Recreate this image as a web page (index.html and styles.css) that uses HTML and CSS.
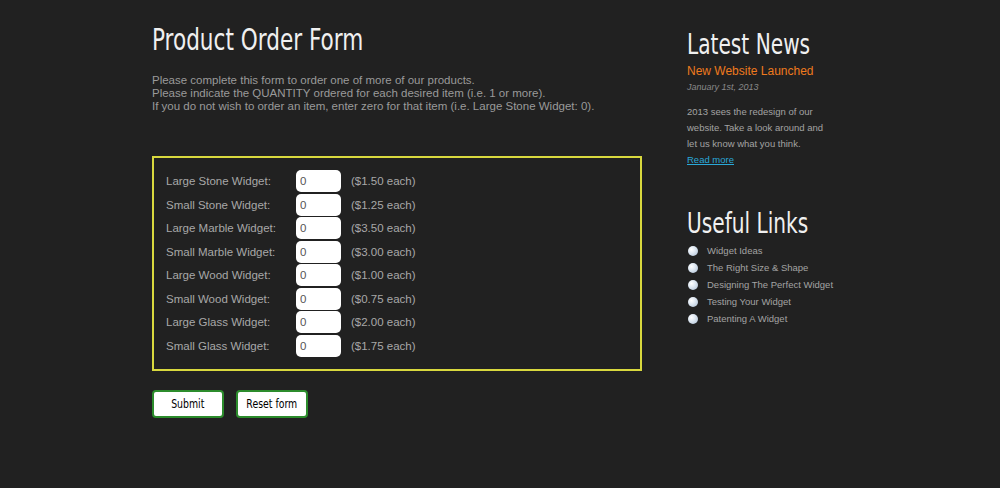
FILE: index.html
```html
<!DOCTYPE html>
<html lang="en">
<head>
  <meta charset="UTF-8" />
  <title>Product Order Form</title>
  <link rel="stylesheet" href="styles.css">
</head>
<body>
  <div class="page">
    <!-- main column -->
    <div class="main">
      <h1 class="title"><span>Product Order Form</span></h1>
      <p class="intro">
        Please complete this form to order one of more of our products.<br>
        Please indicate the QUANTITY ordered for each desired item (i.e. 1 or more).<br>
        If you do not wish to order an item, enter zero for that item (i.e. Large Stone Widget: 0).
      </p>
      <form class="order-form">
        <div class="order-box">
          <div class="item"><label class="item-name">Large Stone Widget:</label><input class="qty" type="text" value="0"><span class="price">($1.50 each)</span></div>
          <div class="item"><label class="item-name">Small Stone Widget:</label><input class="qty" type="text" value="0"><span class="price">($1.25 each)</span></div>
          <div class="item"><label class="item-name">Large Marble Widget:</label><input class="qty" type="text" value="0"><span class="price">($3.50 each)</span></div>
          <div class="item"><label class="item-name">Small Marble Widget:</label><input class="qty" type="text" value="0"><span class="price">($3.00 each)</span></div>
          <div class="item"><label class="item-name">Large Wood Widget:</label><input class="qty" type="text" value="0"><span class="price">($1.00 each)</span></div>
          <div class="item"><label class="item-name">Small Wood Widget:</label><input class="qty" type="text" value="0"><span class="price">($0.75 each)</span></div>
          <div class="item"><label class="item-name">Large Glass Widget:</label><input class="qty" type="text" value="0"><span class="price">($2.00 each)</span></div>
          <div class="item"><label class="item-name">Small Glass Widget:</label><input class="qty" type="text" value="0"><span class="price">($1.75 each)</span></div>
        </div>
        <div class="buttons">
          <button class="btn" type="submit"><span>Submit</span></button>
          <button class="btn" type="reset"><span>Reset form</span></button>
        </div>
      </form>
    </div>

    <!-- sidebar -->
    <div class="sidebar">
      <h2 class="side-title"><span>Latest News</span></h2>
      <div class="news-head">New Website Launched</div>
      <div class="news-date">January 1st, 2013</div>
      <p class="news-text">2013 sees the redesign of our website. Take a look around and let us know what you think.<br><a class="read-more" href="#">Read more</a></p>

      <h2 class="side-title links-title"><span>Useful Links</span></h2>
      <ul class="links">
        <li><a href="#">Widget Ideas</a></li>
        <li><a href="#">The Right Size &amp; Shape</a></li>
        <li><a href="#">Designing The Perfect Widget</a></li>
        <li><a href="#">Testing Your Widget</a></li>
        <li><a href="#">Patenting A Widget</a></li>
      </ul>
    </div>
  </div>
</body>
</html>
```

FILE: styles.css
```css
/* base */
html, body {
  margin: 0;
  padding: 0;
  background: #212121;
  font-family: "Liberation Sans", Arial, sans-serif;
  color: #a3a3a3;
}
.page {
  width: 696px;
  margin: 0 auto;
  padding-top: 22px;
  display: flex;
  gap: 45px;
}

/* headings: narrow display face, squeezed a little */
.title, .side-title {
  margin: 0;
  font-family: "DejaVu Sans Condensed", sans-serif;
  font-weight: normal;
  color: #f0f0f0;
  white-space: nowrap;
}
.title span, .side-title span, .btn span {
  display: inline-block;
  transform: scaleX(0.8);
  transform-origin: left center;
}
.title {
  font-size: 30px;
  line-height: 36px;
}

/* main column */
.main {
  width: 490px;
}
.intro {
  margin: 16px 0 43px;
  font-size: 11.5px;
  line-height: 13px;
  color: #9a9a9a;
}
.order-box {
  border: 2px solid #d8d83e;
  padding: 12px 12px;
  display: flex;
  flex-direction: column;
  gap: 1.5px;
}
.item {
  display: flex;
  align-items: center;
  font-size: 11.5px;
}
.item-name {
  width: 130px;
  color: #a8a8a8;
}
.qty {
  width: 45px;
  height: 22px;
  box-sizing: border-box;
  border: none;
  border-radius: 5px;
  padding: 0 4px;
  font-family: "Liberation Sans", Arial, sans-serif;
  font-size: 11.5px;
  color: #555;
  background: #fff;
}
.price {
  margin-left: 10px;
  color: #a8a8a8;
}

/* buttons */
.buttons {
  margin-top: 19px;
  display: flex;
  gap: 12px;
}
.btn {
  width: 72px;
  height: 28px;
  background: #fff;
  border: 2px solid #2c8c2c;
  border-radius: 4px;
  font-family: "DejaVu Sans Condensed", sans-serif;
  font-size: 13px;
  color: #000;
  padding: 0;
}
.btn span {
  transform-origin: center;
}

/* sidebar */
.sidebar {
  width: 161px;
}
.side-title {
  font-size: 28px;
  line-height: 34px;
  margin-top: 6px;
}
.news-head {
  margin-top: 2px;
  font-size: 12px;
  color: #ee7a1e;
}
.news-date {
  margin-top: 4px;
  font-size: 9px;
  font-style: italic;
  color: #8a8a8a;
}
.news-text {
  margin: 12px 0 0;
  font-size: 9.5px;
  line-height: 16px;
  color: #a3a3a3;
  width: 140px;
}
.read-more {
  color: #2aa8d8;
}
.links-title {
  margin-top: 39px;
}
.links {
  list-style: none;
  margin: 1px 0 0;
  padding: 0;
}
.links li {
  display: flex;
  align-items: center;
  height: 17px;
  font-size: 9.5px;
}
.links li::before {
  content: "";
  width: 10px;
  height: 10px;
  border-radius: 50%;
  margin: 0 9px 0 1px;
  background: radial-gradient(circle at 35% 35%, #ffffff 0%, #dfe8f2 40%, #a9bcd2 100%);
}
.links a {
  color: #a3a3a3;
  text-decoration: none;
}
```
